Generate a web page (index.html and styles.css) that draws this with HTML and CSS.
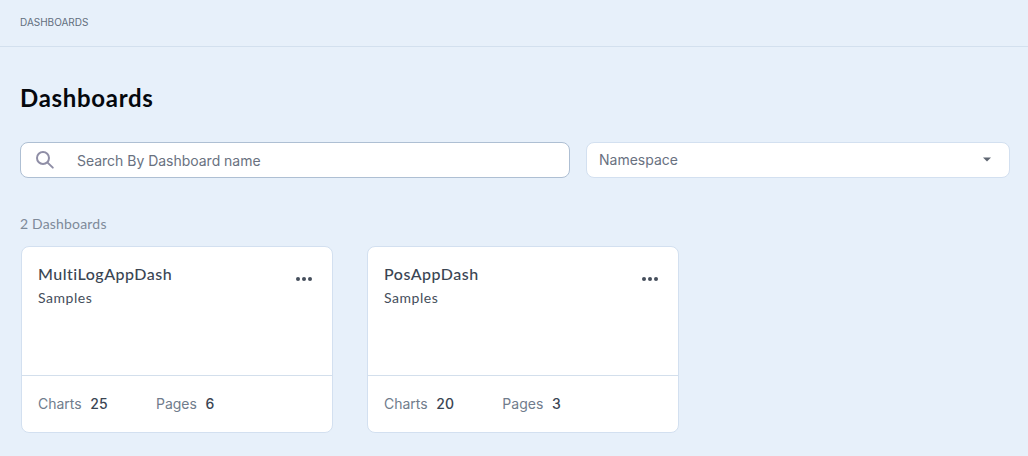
FILE: index.html
```html
<!DOCTYPE html>
<html lang="en">
<head>
<meta charset="utf-8">
<title>Dashboards</title>
<link rel="stylesheet" href="styles.css">
</head>
<body>
<header class="crumbs">DASHBOARDS</header>
<main class="content">
  <h1 class="title">Dashboards</h1>
  <div class="filters">
    <label class="search">
      <svg class="search-icon" width="20" height="20" viewBox="0 0 20 20" fill="none" stroke="#8f8ea6" stroke-width="2" stroke-linecap="round"><circle cx="8" cy="8" r="6"/><path d="M12.6 12.6l5.2 5"/></svg>
      <span class="search-text">Search By Dashboard name</span>
    </label>
    <div class="select">
      <span>Namespace</span>
      <svg class="caret" width="8" height="5" viewBox="0 0 8 5"><path d="M0 .5h8L4 4.5z" fill="#5f6672"/></svg>
    </div>
  </div>
  <p class="count">2 Dashboards</p>
  <div class="cards">
    <article class="card">
      <div class="card-body">
        <div class="card-text">
          <h2 class="card-title">MultiLogAppDash</h2>
          <p class="card-ns">Samples</p>
        </div>
        <div class="dots"><i></i><i></i><i></i></div>
      </div>
      <div class="card-foot">
        <div class="stat"><span>Charts</span><b>25</b></div>
        <div class="stat"><span>Pages</span><b>6</b></div>
      </div>
    </article>
    <article class="card">
      <div class="card-body">
        <div class="card-text">
          <h2 class="card-title">PosAppDash</h2>
          <p class="card-ns">Samples</p>
        </div>
        <div class="dots"><i></i><i></i><i></i></div>
      </div>
      <div class="card-foot">
        <div class="stat"><span>Charts</span><b>20</b></div>
        <div class="stat"><span>Pages</span><b>3</b></div>
      </div>
    </article>
  </div>
</main>
</body>
</html>
```

FILE: styles.css
```css
* { box-sizing: border-box; }
html, body { height: 100%; }
body {
  margin: 0;
  background: #e7f0fa;
  font-family: "Inter", "Liberation Sans", sans-serif;
  overflow: hidden;
}
.crumbs {
  height: 47px;
  padding: 16px 20px 0;
  border-bottom: 1px solid #d3e0ee;
  font-size: 10px;
  line-height: 12px;
  color: #626e7d;
}
.content { padding: 0 18px 0 20px; }
.title {
  margin: 34px 0 0;
  font-family: "Lato", sans-serif;
  font-size: 24px;
  line-height: 34px;
  font-weight: 700;
  letter-spacing: .7px;
  color: #05080d;
}
.filters {
  display: flex;
  gap: 16px;
  margin-top: 27px;
}
.search {
  display: flex;
  align-items: center;
  width: 550px;
  height: 36px;
  padding-left: 14px;
  background: #fff;
  border: 1px solid #aebfd3;
  border-radius: 8px;
}
.search-icon { flex: none; }
.search-text {
  margin-left: 22px;
  font-size: 14px;
  letter-spacing: -.02px;
  color: #69717f;
}
.select {
  display: flex;
  flex: 1;
  align-items: center;
  justify-content: space-between;
  height: 36px;
  padding: 0 18px 1px 12px;
  background: #fff;
  border: 1px solid #d3e0f0;
  border-radius: 8px;
  font-size: 14px;
  color: #69717f;
}
.count {
  margin: 37px 0 0;
  font-family: "Lato", sans-serif;
  font-size: 14px;
  line-height: 18px;
  letter-spacing: .18px;
  color: #7e8a99;
}
.cards {
  display: flex;
  gap: 34px;
  margin: 13px 0 0 1px;
}
.card {
  width: 312px;
  height: 187px;
  background: #fff;
  border: 1px solid #d3e0f0;
  border-radius: 8px;
  display: flex;
  flex-direction: column;
}
.card-body {
  flex: 1;
  display: flex;
  justify-content: space-between;
  padding: 16px 20px 0 16px;
  border-bottom: 1px solid #d3dfec;
}
.card-title {
  margin: 0;
  font-family: "Lato", sans-serif;
  font-size: 16px;
  line-height: 22px;
  font-weight: 500;
  letter-spacing: .5px;
  color: #3a4553;
}
.card-ns {
  margin: 4px 0 0;
  font-family: "Lato", sans-serif;
  font-size: 14px;
  line-height: 18px;
  letter-spacing: .55px;
  color: #444e5b;
}
.dots {
  display: flex;
  gap: 2px;
  margin-top: 14px;
  height: 4px;
}
.dots i {
  width: 4px;
  height: 4px;
  border-radius: 50%;
  background: #454e5c;
}
.card-foot {
  height: 56px;
  display: flex;
  align-items: center;
  gap: 48.4px;
  padding-left: 16px;
}
.stat {
  display: flex;
  gap: 8.6px;
  font-size: 14px;
  line-height: 18px;
  color: #707c8c;
}
.stat b {
  font-weight: 500;
  color: #3a4553;
}
```
